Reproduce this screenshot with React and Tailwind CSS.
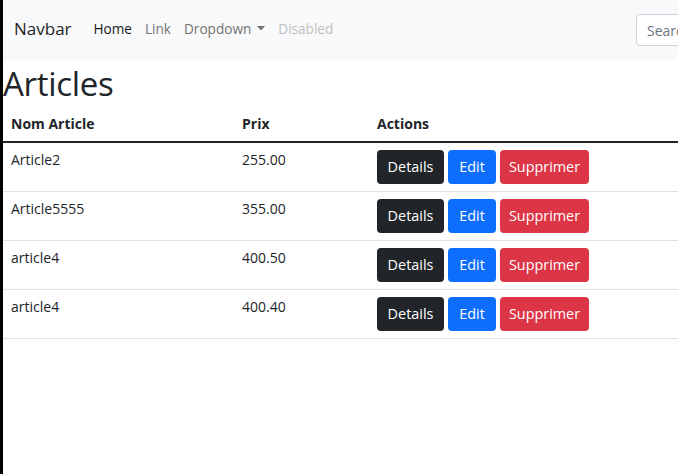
export default function App() {
  const rows = [
    { name: "Article2", prix: "255.00" },
    { name: "Article5555", prix: "355.00" },
    { name: "article4", prix: "400.50" },
    { name: "article4", prix: "400.40" },
  ];
  return (
    <div className="min-h-[474px] w-[678px] overflow-hidden border-l-[3px] border-black bg-white text-[#212529] font-['Open_Sans',sans-serif]">
      <nav className="flex h-[60px] items-center bg-[#f8f9fa] pl-[11px] pb-[2px] whitespace-nowrap">
        <span className="text-[17px] text-[#1f1f1f] mr-[22px]">Navbar</span>
        <div className="flex items-center text-[13.6px] gap-[13px]">
          <span className="text-[#1a1a1a]">Home</span>
          <span className="text-[#737373]">Link</span>
          <span className="flex items-center text-[#737373]">
            Dropdown
            <svg width="8" height="5" viewBox="0 0 8 5" className="ml-[6px]">
              <path d="M0 0 L8 0 L4 4.5 Z" fill="#737373" />
            </svg>
          </span>
          <span className="text-[#bfbfbf]">Disabled</span>
        </div>
        <div className="ml-auto mr-[-82px] mt-[2px] flex h-[32px] w-[124px] items-center rounded-[4px] border border-[#ced4da] bg-white pl-[10px] text-[14px] text-[#6c757d]">
          Search
        </div>
      </nav>
      <h1 className="h-[44px] pt-[2px] text-[33px] leading-[43px] font-medium tracking-[-0.3px]">Articles</h1>
      <table className="w-full border-collapse text-[14px]">
        <thead>
          <tr className="border-b-2 border-[#212529]">
            <th className="w-[231px] h-[38px] px-[8px] pb-[7px] align-bottom text-left font-bold leading-[21px]">Nom Article</th>
            <th className="w-[135px] px-[8px] pb-[7px] align-bottom text-left font-bold leading-[21px]">Prix</th>
            <th className="px-[8px] pb-[7px] align-bottom text-left font-bold leading-[21px]">Actions</th>
          </tr>
        </thead>
        <tbody>
          {rows.map((r, i) => (
            <tr key={i} className="border-b border-[#dee2e6]">
              <td className="h-[48px] px-[8px] pt-[6px] align-top leading-[21px]">{r.name}</td>
              <td className="px-[8px] pt-[6px] align-top leading-[21px]">{r.prix}</td>
              <td className="px-[8px] py-[7px] align-top">
                <div className="flex gap-[4px] text-white text-[14.4px]">
                  <span className="flex h-[34px] w-[67px] items-center justify-center rounded-[4px] bg-[#212529]">Details</span>
                  <span className="flex h-[34px] w-[48px] items-center justify-center rounded-[4px] bg-[#0d6efd]">Edit</span>
                  <span className="flex h-[34px] w-[89px] items-center justify-center rounded-[4px] bg-[#dc3545]">Supprimer</span>
                </div>
              </td>
            </tr>
          ))}
        </tbody>
      </table>
    </div>
  );
}
